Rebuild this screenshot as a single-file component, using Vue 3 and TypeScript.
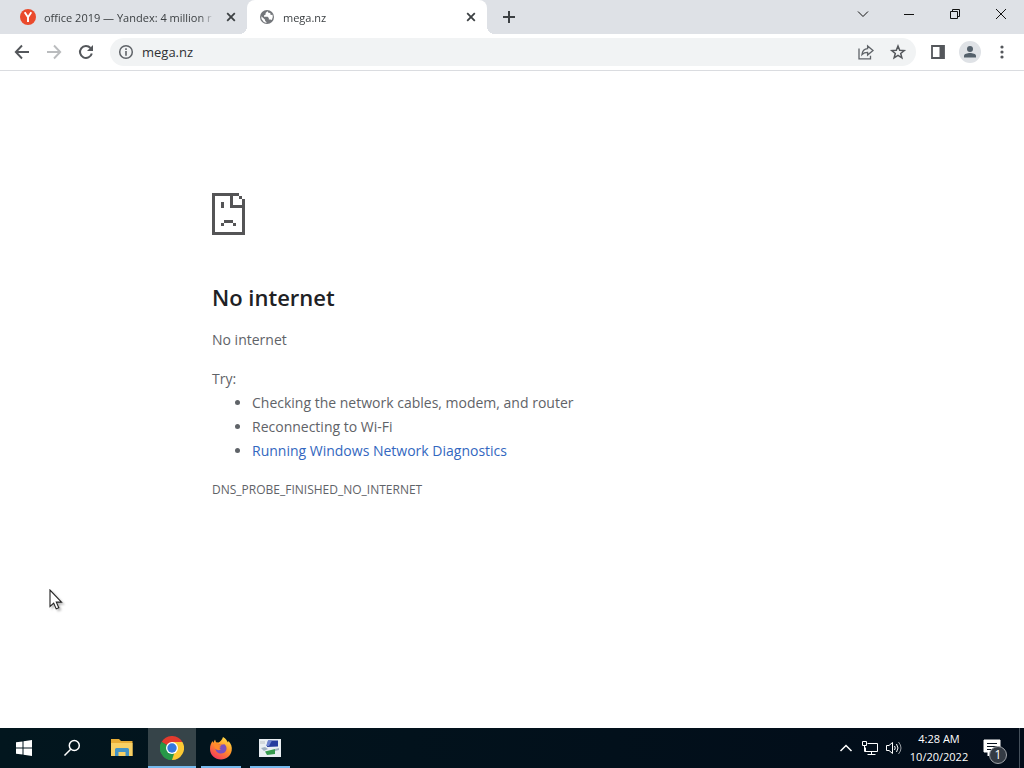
<script setup lang="ts">
import { ref } from 'vue'

interface Tab {
  id: string
  title: string
}

const tabs: Tab[] = [
  { id: 'yandex', title: 'office 2019 — Yandex: 4 million r' },
  { id: 'mega', title: 'mega.nz' },
]
const activeTab = ref('mega')
const address = ref('mega.nz')
const tips: string[] = ['Checking the network cables, modem, and router', 'Reconnecting to Wi-Fi']
</script>

<template>
  <div class="desktop">
    <header class="tabstrip">
      <div v-for="tab in tabs" :key="tab.id" class="tab" :class="{ active: tab.id === activeTab }">
        <button class="tab-select" type="button" @click="activeTab = tab.id">
          <svg v-if="tab.id === 'yandex'" class="favicon" viewBox="0 0 16 16" aria-hidden="true">
            <circle cx="8" cy="8" r="8" fill="#ea4a2c" />
            <path d="M4.700 3.300 8 8.300V13M11.300 3.300 8 8.300" fill="none" stroke="#fff" stroke-width="1.900" />
          </svg>
          <svg v-else class="favicon" viewBox="0 0 16 16" aria-hidden="true">
            <circle cx="8" cy="8" r="7" fill="#74777b" />
            <path d="M8.500 2.200 6.600 3.900v1.500L5 6.600v1.200h3.600l1.200 1.300v1.300h1.700l1.300.7 1-3-.3-2.400-1.800.2-.5-1.800-1.800-.3-.7-1.200zM2.300 7.300l3.800 3.400v1.200l1.300 1v1l-2.600-.9L2.500 10z" fill="#fff" />
          </svg>
          <span class="tab-title">{{ tab.title }}</span>
        </button>
        <button class="tab-close" type="button" :aria-label="`Close ${tab.title}`">
          <svg width="16" height="16" viewBox="0 0 16 16"><path d="m4.200 4.200 7.600 7.600m0-7.600-7.600 7.600" stroke="#3c4043" stroke-width="1.800" /></svg>
        </button>
      </div>
      <button class="new-tab" type="button" aria-label="New tab">
        <svg width="16" height="16" viewBox="0 0 16 16"><path d="M8 2v12M2 8h12" stroke="#3c4043" stroke-width="2" /></svg>
      </button>
      <div class="window-buttons">
        <button type="button" aria-label="Search tabs">
          <svg width="16" height="16" viewBox="0 0 16 16"><path d="m3 5.500 5 5 5-5" /></svg>
        </button>
        <button type="button" aria-label="Minimize">
          <svg width="16" height="16" viewBox="0 0 16 16"><path d="M3 8.500h10" /></svg>
        </button>
        <button type="button" aria-label="Restore">
          <svg width="16" height="16" viewBox="0 0 16 16"><path d="M3.500 5.500h7v7h-7zM5.500 5.500V3.500h7v7h-2" /></svg>
        </button>
        <button type="button" aria-label="Close window">
          <svg width="16" height="16" viewBox="0 0 16 16"><path d="m3 3 10 10M13 3 3 13" /></svg>
        </button>
      </div>
    </header>

    <nav class="toolbar" aria-label="Browser toolbar">
      <button type="button" aria-label="Back">
        <svg width="20" height="20" viewBox="0 0 20 20"><path d="M17 10H4.500M10 3.500 3.800 10l6.200 6.500" fill="none" stroke="#54575b" stroke-width="1.900" /></svg>
      </button>
      <button type="button" aria-label="Forward" disabled>
        <svg width="20" height="20" viewBox="0 0 20 20"><path d="M3 10h12.500M10 3.500 16.200 10 10 16.500" fill="none" stroke="#babcbe" stroke-width="1.900" /></svg>
      </button>
      <button type="button" aria-label="Reload">
        <svg width="20" height="20" viewBox="0 0 20 20"><path d="M15.800 11.500A6 6 0 1 1 14.500 6" fill="none" stroke="#54575b" stroke-width="2" /><path d="M17 3v6h-6z" fill="#54575b" /></svg>
      </button>
      <div class="omnibox">
        <button type="button" aria-label="Site information">
          <svg width="16" height="16" viewBox="0 0 16 16"><circle cx="8" cy="8" r="6.300" fill="none" stroke="#5f6368" stroke-width="1.500" /><path d="M8 4.300v1.700M8 7v4.700" stroke="#5f6368" stroke-width="1.600" /></svg>
        </button>
        <input v-model="address" type="text" aria-label="Address" spellcheck="false" />
        <button type="button" aria-label="Share">
          <svg width="18" height="18" viewBox="0 0 18 18" fill="none" stroke="#5f6368" stroke-width="1.300"><path d="M2 5.500v10.300h11.500v-3" /><path d="M5 11.500c.4-3.600 2.300-5.500 5.600-5.800V3l5.400 4.600-5.400 4.500V9.400c-2.400 0-4.200.6-5.600 2.100z" /></svg>
        </button>
        <button type="button" aria-label="Bookmark">
          <svg width="18" height="18" viewBox="0 0 18 18"><path d="m9 3 1.700 4.200 4.500.3-3.500 2.900 1.200 4.400L9 12.400l-3.900 2.400 1.200-4.400-3.500-2.900 4.500-.3z" fill="none" stroke="#54575b" stroke-width="1.500" /></svg>
        </button>
      </div>
      <button type="button" aria-label="Side panel">
        <svg width="16" height="16" viewBox="0 0 16 16"><path d="M2 2h12v12H2z" fill="none" stroke="#54575b" stroke-width="1.800" /><path d="M9.500 2H14v12H9.500z" fill="#54575b" /></svg>
      </button>
      <button type="button" aria-label="Profile">
        <svg width="22" height="22" viewBox="0 0 22 22"><circle cx="11" cy="11" r="11" fill="#dfe2e6" /><circle cx="11" cy="8" r="3" fill="#54606b" /><path d="M5 16.500v-1.700c0-2 3.500-2.900 6-2.900s6 .9 6 2.900v1.700z" fill="#54606b" /></svg>
      </button>
      <button type="button" aria-label="Menu">
        <svg width="16" height="16" viewBox="0 0 16 16" fill="#54575b"><circle cx="8" cy="3" r="1.600" /><circle cx="8" cy="8" r="1.600" /><circle cx="8" cy="13" r="1.600" /></svg>
      </button>
    </nav>

    <main class="page">
      <section class="error">
        <svg class="sad-page" viewBox="0 0 11 14" shape-rendering="crispEdges" aria-hidden="true">
          <path d="M0 0h9v1h1v1h1v12H0zM1 1v12h9V5H6V1zM7 1v3h3V2H9V1zM3 3h1v2H3zM4 9h3v1H4zM3 10h1v1H3zM7 10h1v1H7z" fill="#545456" fill-rule="evenodd" />
        </svg>
        <h1>No internet</h1>
        <p class="summary">No internet</p>
        <p class="try">Try:</p>
        <ul>
          <li v-for="tip in tips" :key="tip">{{ tip }}</li>
          <li><a href="#diagnostics">Running Windows Network Diagnostics</a></li>
        </ul>
        <p class="code">DNS_PROBE_FINISHED_NO_INTERNET</p>
      </section>
    </main>

    <footer class="taskbar">
      <button class="task" type="button" aria-label="Start">
        <svg width="16" height="16" viewBox="0 0 16 16" fill="#fff"><path d="M0 2.300 6.500 1.400v6.100H0zM7.500 1.200 16 0v7.500H7.500zM0 8.500h6.500v6.100L0 13.700zM7.500 8.500H16V16l-8.500-1.200z" /></svg>
      </button>
      <button class="task" type="button" aria-label="Search">
        <svg width="18" height="18" viewBox="0 0 18 18" fill="none" stroke="#fff" stroke-width="1.500"><circle cx="11.300" cy="6.500" r="5" /><path d="M7.700 10.200 1.500 16.500" /></svg>
      </button>
      <button class="task wide" type="button" aria-label="File Explorer">
        <svg width="22" height="20" viewBox="0 0 22 20"><path d="M0 1h8l2 2h11.500v15H0z" fill="#e8ad36" /><path d="M0 5h21.500v13H0z" fill="#f8d064" /><path d="M4 18v-6.500q0-1.500 1.500-1.500h11q1.500 0 1.500 1.500V18h-3.500v-4h-7v4z" fill="#4393c5" /></svg>
      </button>
      <button class="task running current" type="button" aria-label="Google Chrome">
        <svg width="24" height="24" viewBox="0 0 24 24"><path d="M12 12 1.600 6A12 12 0 0 1 22.400 6z" fill="#e33b2e" /><path d="M12 12V24A12 12 0 0 1 1.600 6z" fill="#279847" /><path d="M12 12 22.400 6A12 12 0 0 1 12 24z" fill="#fcc934" /><path d="M12 6h10.400L17.200 15 12 24l2-6z" fill="#fcc934" /><path d="M1.600 6 6.800 15l4 3 3.500-1L12 24A12 12 0 0 1 1.600 6z" fill="#279847" /><circle cx="12" cy="12" r="6" fill="#fff" /><circle cx="12" cy="12" r="4.700" fill="#3478df" /></svg>
      </button>
      <button class="task running" type="button" aria-label="Firefox">
        <svg width="24" height="24" viewBox="0 0 24 24">
          <defs><linearGradient id="flame" x1="0.800" y1="0" x2="0.200" y2="1"><stop offset="0" stop-color="#ffe34a" /><stop offset="0.450" stop-color="#ff9428" /><stop offset="1" stop-color="#f52f61" /></linearGradient></defs>
          <path d="M14 1c3 1.500 4 3.800 5 5.500l.5-1.500c2.700 2.700 3.800 6 3.200 9.500C21.700 20 17.500 23.500 12 23.500 6 23.500 1 19.300 1 13c0-3.400 1-6 2.800-8l.4 2L6 3.500l1 2.800 2.500.2c1.800-.8 3.500-2.500 4.500-5.500z" fill="url(#flame)" />
          <path d="M7 8.500c2-1 3.500-.6 4.500.2l4-.5c1.700 1.500 2.500 3.500 1.800 5.700-.8 2.300-3 3.600-5.300 3.600-3 0-5.300-2-5.500-4.500l3-.5 2.500-1.500z" fill="#7951be" />
          <path d="M4.500 8c2-1.500 4-1 5 .2l3 .5c0 1.300-2.500 1.200-2.800 2.700l2 2c-1.700 1.500-3.700.5-5.200-.4z" fill="#ff8a2b" />
        </svg>
      </button>
      <button class="task running" type="button" aria-label="System utility">
        <svg width="22" height="20" viewBox="0 0 22 20"><path d="M0 1h22v18H0z" fill="#e9eef2" /><path d="M9 2.500h10v6L8 9z" fill="#263b9e" /><path d="M9 2.500h4L10 8H7z" fill="#6c82cf" /><path d="M1 3h5v3H1z" fill="#d2d7dc" /><path d="M6 13.500 16 11v5l-8 1z" fill="#379a4e" /><path d="m2 10 4-1 3 2-4 2zM16 11l4-1v2l-4 1z" fill="#a0b0c2" /></svg>
      </button>
      <div class="tray">
        <button type="button" aria-label="Show hidden icons">
          <svg width="16" height="16" viewBox="0 0 16 16"><path d="m2.500 11 5.500-5.500 5.500 5.500" stroke-width="1.500" /></svg>
        </button>
        <button type="button" aria-label="Network">
          <svg width="18" height="16" viewBox="0 0 18 16"><path d="M6.500 3.500h10v8h-12v-4M10.500 11.500v3M6.500 14.500h8M1.500 1.500h4v4h-4zM3.500 5.500v6h2" /></svg>
        </button>
        <button type="button" aria-label="Volume">
          <svg width="18" height="16" viewBox="0 0 18 16"><path d="M1.500 5.500h2.500l3.500-3v11l-3.500-3H1.500zM9.500 6q1.500 2 0 4M11.500 4q3 4 0 8" /><path d="M13.500 2q5 6 0 12" opacity=".6" /></svg>
        </button>
        <button class="clock" type="button"><span>4:28 AM</span><span>10/20/2022</span></button>
        <button class="notifications" type="button" aria-label="Notifications">
          <svg width="18" height="18" viewBox="0 0 18 18"><path class="solid" d="M1 1h16v12H9l-4 4v-4H1z" /><path class="lines" d="M4 4.500h10M4 7.500h10M4 10.500h6" /></svg>
          <span class="badge">1</span>
        </button>
      </div>
    </footer>

    <svg class="pointer" width="14" height="22" viewBox="0 0 14 22" aria-hidden="true"><path d="M1 1v16.500l3.700-3.400 2.500 5.800 2.600-1.100-2.500-5.700h5.200z" fill="#fff" stroke="#222" stroke-width="1.100" /></svg>
  </div>
</template>

<style>
body {
  margin: 0;
}
</style>

<style scoped>
.desktop {
  position: relative;
  display: flex;
  flex-direction: column;
  min-height: 100vh;
  background: #fff;
  color: #3c4043;
  font-family: "Segoe UI", "Open Sans", "Noto Sans", sans-serif;
  font-size: 11px;
}

button {
  display: inline-flex;
  align-items: center;
  justify-content: center;
  padding: 0;
  border: 0;
  background: none;
  color: inherit;
  font: inherit;
}

svg {
  flex: none;
}

.tabstrip {
  display: flex;
  height: 34px;
  background: #dee1e6;
}

.tab {
  position: relative;
  display: flex;
  align-items: center;
  box-sizing: border-box;
  width: 240px;
  padding: 0 8px 0 12px;
}

.tab:first-child {
  width: 239px;
  margin-left: 8px;
}

.tab.active {
  border-radius: 8px 8px 0 0;
  background: #fff;
}

.tab.active::before,
.tab.active::after {
  content: "";
  position: absolute;
  bottom: 0;
  width: 8px;
  height: 8px;
}

.tab.active::before {
  right: 100%;
  background: radial-gradient(circle at 0 0, #dee1e6 8px, #fff 8px);
}

.tab.active::after {
  left: 100%;
  background: radial-gradient(circle at 100% 0, #dee1e6 8px, #fff 8px);
}

.tab-select {
  flex: 1;
  justify-content: flex-start;
  gap: 8px;
  min-width: 0;
  height: 34px;
}

.favicon {
  width: 16px;
  height: 16px;
}

.tab-title {
  flex: 1;
  overflow: hidden;
  text-align: left;
  white-space: nowrap;
  mask-image: linear-gradient(to left, transparent, #000 16px);
}

.tab-close {
  width: 16px;
  margin-left: 8px;
}

.new-tab {
  width: 28px;
  margin-left: 8px;
}

.window-buttons {
  display: flex;
  margin-left: auto;
}

.window-buttons button {
  width: 46px;
  height: 28px;
}

.window-buttons path {
  fill: none;
  stroke: #111;
}

.toolbar {
  display: flex;
  align-items: center;
  gap: 4px;
  height: 36px;
  padding: 0 8px;
  border-bottom: 1px solid #dadce0;
}

.toolbar > button {
  width: 28px;
  height: 28px;
}

.omnibox {
  display: flex;
  flex: 1;
  align-items: center;
  height: 28px;
  margin: 0 4px 0 6px;
  padding-right: 2px;
  border-radius: 14px;
  background: #f1f3f4;
}

.omnibox button {
  width: 32px;
}

.omnibox input {
  flex: 1;
  min-width: 0;
  padding: 0;
  border: 0;
  outline: 0;
  background: none;
  color: #303134;
  font: inherit;
  font-size: 13px;
}

.page {
  flex: 1;
  color: #5f6368;
  font-size: 14px;
  line-height: 24px;
}

.error {
  max-width: 600px;
  margin: 0 auto;
  padding-top: 122px;
}

.sad-page {
  display: block;
  width: 33px;
  height: 42px;
}

h1 {
  margin: 47px 0 16px;
  color: #202124;
  font-size: 22px;
  font-weight: 600;
  line-height: 30px;
}

p,
ul {
  margin: 0;
}

ul {
  padding-left: 40px;
}

.try {
  margin-top: 15px;
}

a {
  color: #3367c0;
  text-decoration: none;
}

.code {
  margin-top: 15px;
  font-size: 12px;
}

.taskbar {
  display: flex;
  height: 40px;
  background: linear-gradient(90deg, #02161e, #020c19);
  color: #fff;
}

.task {
  width: 48px;
  box-sizing: border-box;
}

.task.wide {
  width: 52px;
}

.task.running {
  width: 40px;
  margin: 0 4px 0 5px;
  border-top: 2px solid transparent;
  border-bottom: 2px solid #76b9ed;
}

.task.current {
  width: 48px;
  margin: 0;
  background: #364449;
}

.tray {
  display: flex;
  margin-left: auto;
  padding-right: 4px;
}

.tray button {
  width: 24px;
}

.tray path {
  fill: none;
  stroke: #fff;
}

.tray .clock {
  flex-direction: column;
  width: 66px;
  line-height: 18px;
}

.tray .notifications {
  position: relative;
  box-sizing: border-box;
  width: 48px;
  padding-right: 8px;
  border-right: 1px solid #45505b;
}

.tray .solid {
  fill: #fff;
}

.tray .lines {
  stroke: #07121f;
}

.badge {
  position: absolute;
  right: 12px;
  bottom: 4px;
  width: 16px;
  border: 1px solid #a0a4a9;
  border-radius: 50%;
  background: #343b44;
  font-size: 12px;
  line-height: 16px;
}

.pointer {
  position: absolute;
  top: 589px;
  left: 49px;
  filter: drop-shadow(2px 2px 1px #0004);
}
</style>
